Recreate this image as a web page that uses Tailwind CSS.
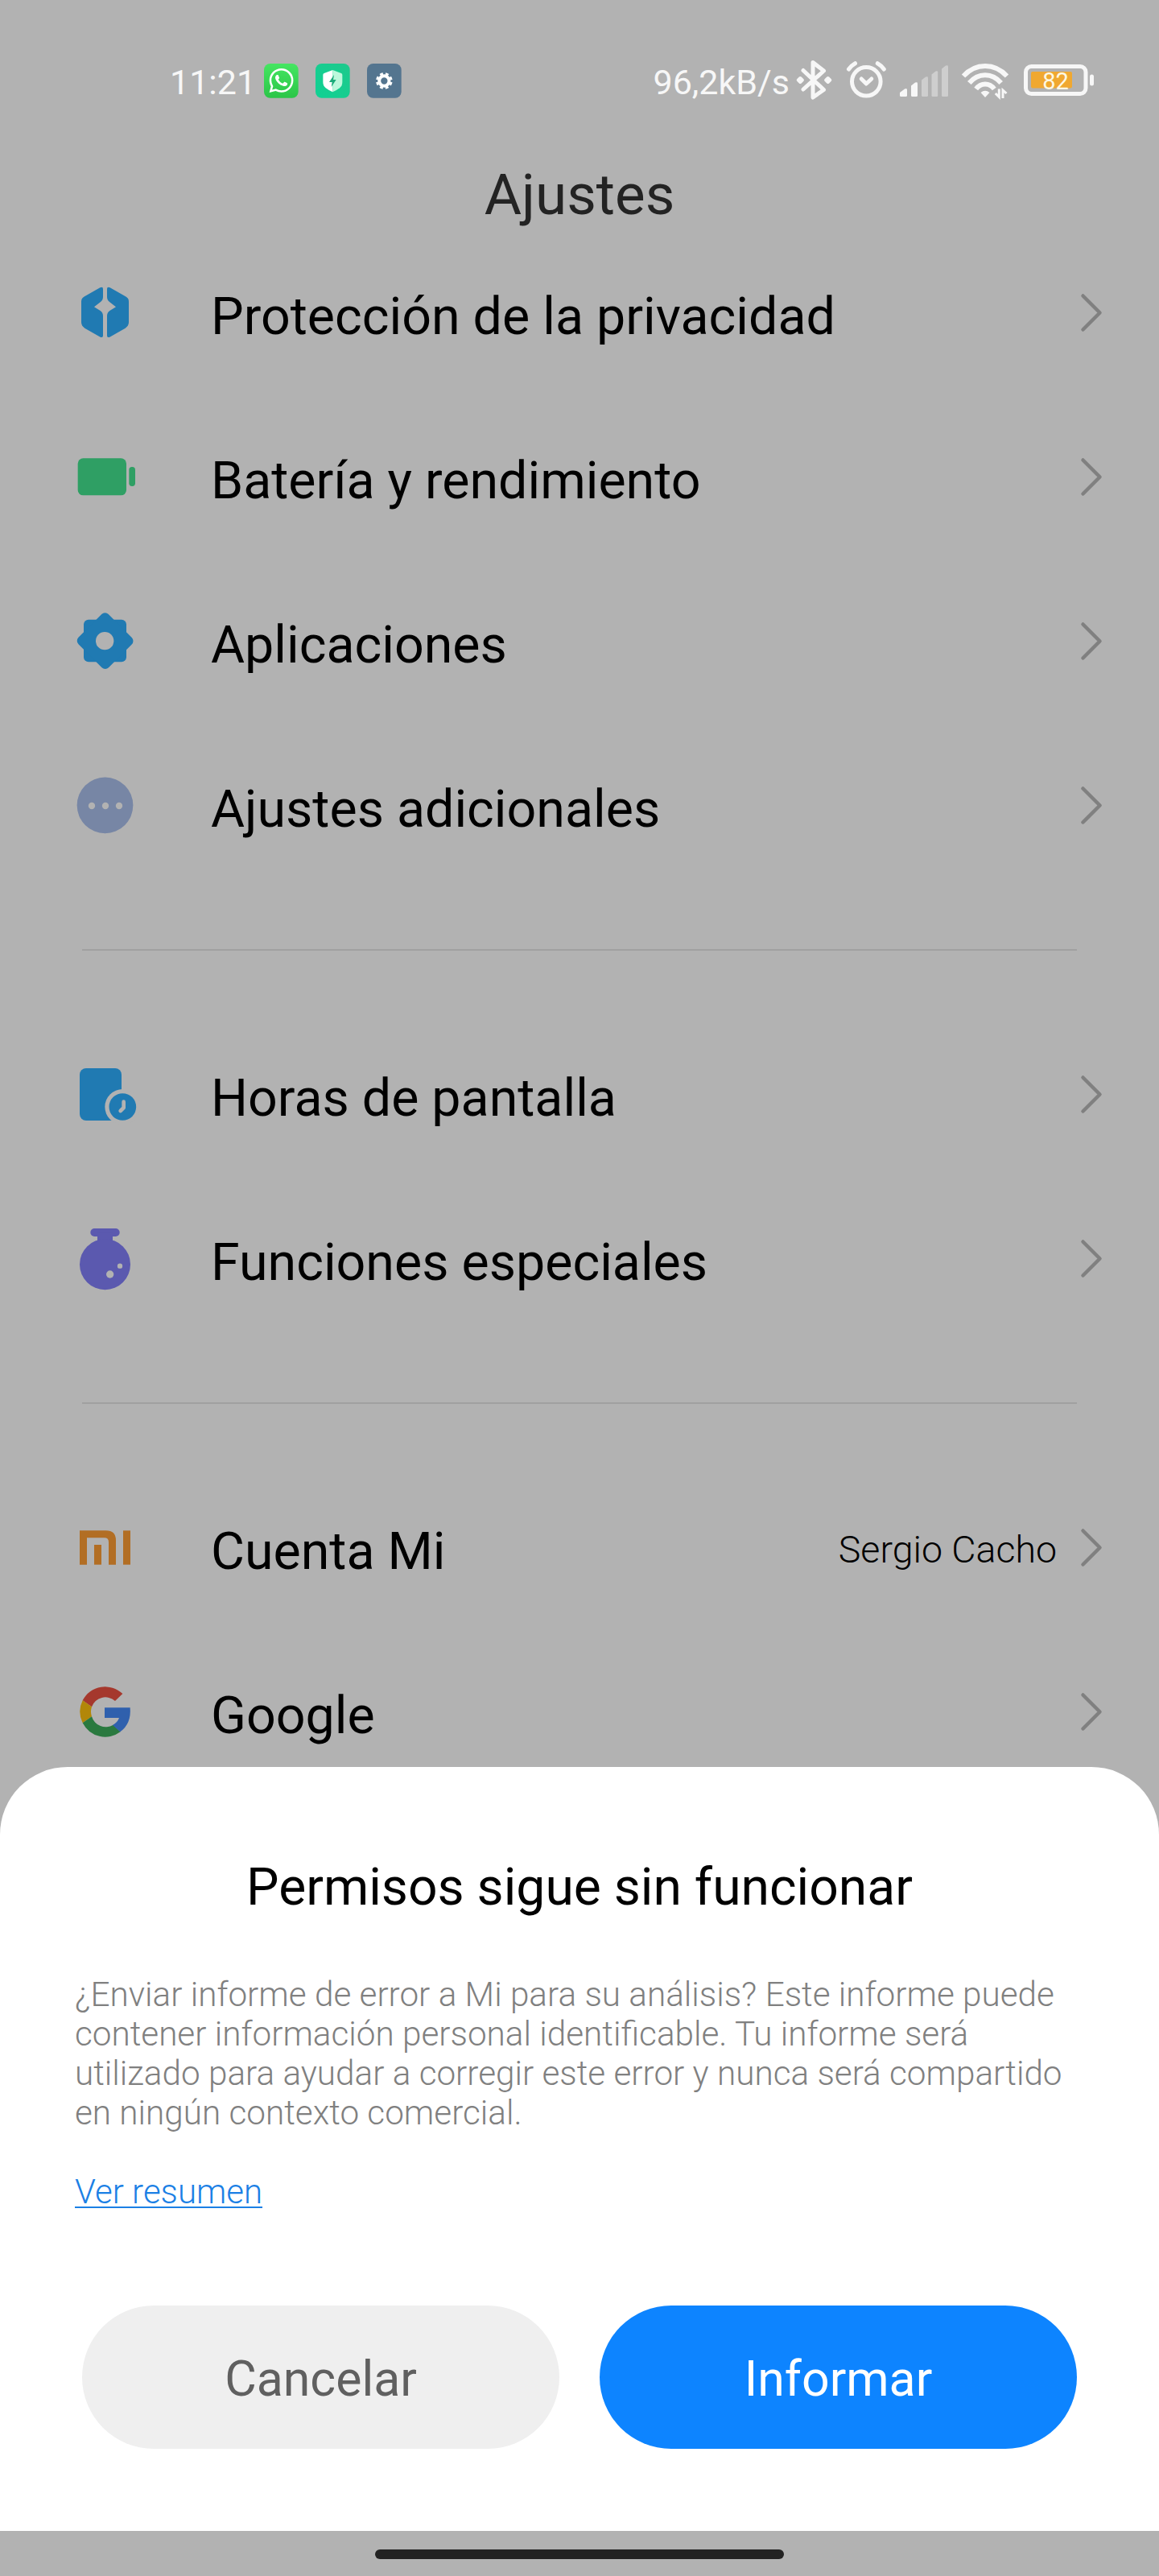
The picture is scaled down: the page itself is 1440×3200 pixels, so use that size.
<!DOCTYPE html>
<html lang="es">
<head>
    <meta charset="UTF-8">
    <meta name="viewport" content="width=device-width, initial-scale=1.0">
    <title>Ajustes</title>
    <script src="https://cdn.jsdelivr.net/npm/@tailwindcss/browser@4"></script>
</head>
<body class="bg-[#b2b2b2]">
<div class="w-[1440px] h-[3200px] flex flex-col overflow-hidden bg-[#b2b2b2] text-black font-['Roboto',sans-serif]">

    <!-- Status bar -->
    <div class="h-[200px] shrink-0 flex items-center justify-between pl-[211px] pr-[79px] text-[43px] leading-none text-[#f7f7f7]">
        <div class="flex items-center">
            <span class="w-[117px] pt-[4px]">11:21</span>
            <svg class="w-[43px] h-[43px]" viewBox="413 56 129 129">
                <defs>
                    <linearGradient id="wa" x1="0" y1="0" x2="0" y2="1">
                        <stop offset="0" stop-color="#45e661"/>
                        <stop offset="1" stop-color="#2bc548"/>
                    </linearGradient>
                </defs>
                <rect x="413" y="56" width="128" height="128" rx="23" fill="url(#wa)"/>
                <path transform="translate(432.500 74) scale(3.750)" fill="#fff" d="M17.472 14.382c-.297-.149-1.758-.867-2.03-.967-.273-.099-.471-.148-.67.15-.197.297-.767.966-.94 1.164-.173.199-.347.223-.644.075-.297-.15-1.255-.463-2.39-1.475-.883-.788-1.48-1.761-1.653-2.059-.173-.297-.018-.458.13-.606.134-.133.298-.347.446-.52.149-.174.198-.298.298-.497.099-.198.05-.371-.025-.52-.075-.149-.669-1.612-.916-2.207-.242-.579-.487-.5-.669-.51-.173-.008-.371-.01-.57-.01-.198 0-.52.074-.792.372-.272.297-1.04 1.016-1.04 2.479 0 1.462 1.065 2.875 1.213 3.074.149.198 2.096 3.2 5.077 4.487.709.306 1.262.489 1.694.625.712.227 1.36.195 1.871.118.571-.085 1.758-.719 2.006-1.413.248-.694.248-1.289.173-1.413-.074-.124-.272-.198-.57-.347m-5.421 7.403h-.004a9.87 9.87 0 01-5.031-1.378l-.361-.214-3.741.982.998-3.648-.235-.374a9.86 9.86 0 01-1.51-5.26c.001-5.45 4.436-9.884 9.888-9.884 2.64 0 5.122 1.03 6.988 2.898a9.825 9.825 0 012.893 6.994c-.003 5.45-4.437 9.884-9.885 9.884m8.413-18.297A11.815 11.815 0 0012.05 0C5.495 0 .16 5.335.157 11.892c0 2.096.547 4.142 1.588 5.945L.057 24l6.305-1.654a11.882 11.882 0 005.683 1.448h.005c6.554 0 11.89-5.335 11.893-11.893a11.821 11.821 0 00-3.48-8.413z"/>
            </svg>
            <svg class="ml-[21px] w-[43px] h-[43px]" viewBox="605 56 129 129">
                <defs>
                    <linearGradient id="sec" x1="1" y1="0" x2="0" y2="1">
                        <stop offset="0" stop-color="#1ec98c"/>
                        <stop offset="1" stop-color="#0fd193"/>
                    </linearGradient>
                </defs>
                <rect x="605" y="56" width="128" height="128" rx="23" fill="url(#sec)"/>
                <path d="M669 80l-32 12q-4 2-4 6v27q0 14 10 22 10 8 26 15z" fill="#fff"/>
                <path d="M669 80l32 12q4 2 4 6v27q0 14-10 22-10 8-26 15z" fill="#bdf8dc"/>
                <path d="M674 98l-18 27h11l-3 18 18-27h-11z" fill="#1cab7a"/>
            </svg>
            <svg class="ml-[21px] w-[43px] h-[43px]" viewBox="797 56 129 129">
                <rect x="797" y="56" width="128" height="128" rx="23" fill="#54758f"/>
                <g fill="none" stroke="#fff">
                    <circle cx="861" cy="120.500" r="18.500" stroke-width="12"/>
                    <circle cx="861" cy="120.500" r="27" stroke-width="8" pathLength="16" stroke-dasharray="1.100 0.900" stroke-dashoffset="-0.450"/>
                </g>
            </svg>
        </div>

        <div class="flex items-center gap-3">
            <span class="-mr-1.5 pt-[4px]">96,2kB/s</span>
            <!-- bluetooth -->
            <svg class="w-[51px] h-[50px]" viewBox="197 15 51 50" fill="none" stroke="#f7f7f7" stroke-width="5" stroke-linejoin="round" stroke-linecap="round">
                <path d="M208 27.500l25.500 24L220 61V17.500l13.500 10.500L208 51"/>
                <path d="M204.300 37l2.500 2.500-2.500 2.500-2.500-2.500zM238.700 37l2.500 2.500-2.500 2.500-2.500-2.500z" fill="#f7f7f7" stroke-width="4"/>
            </svg>
            <!-- alarm -->
            <svg class="w-[54px] h-[50px]" viewBox="260 15 54 50" fill="none" stroke="#f7f7f7" stroke-width="5" stroke-linejoin="round" stroke-linecap="round">
                <circle cx="286.300" cy="41.300" r="17.800"/>
                <path d="M280.200 38l6.100 6 6.500-6M264.500 26q3-4.500 8-7.300M308.300 26q-3-4.500-8-7.300"/>
            </svg>
            <!-- signal -->
            <svg class="w-[64px] h-[50px]" viewBox="326 15 64 50" fill="#f7f7f7">
                <path d="M328 55l6-4.500q3-1.500 3 1v7q0 1.500-1.500 1.500h-6q-1.500 0-1.500-1.500z"/>
                <path d="M342 46.500l5-4q3-1 3 1v15q0 1.500-1.500 1.500h-5q-1.500 0-1.500-1.500z"/>
                <g fill="#cecece">
                    <path d="M355 39.500l5-4q3-1 3 1v22q0 1.500-1.500 1.500h-5q-1.500 0-1.500-1.500z"/>
                    <path d="M367.500 32.500l5-4q2.700-1 2.700 1v29q0 1.500-1.500 1.500h-4.700q-1.500 0-1.500-1.500z"/>
                    <path d="M380 25.500l5-4q3-1 3 1v36q0 1.500-1.500 1.500h-5q-1.500 0-1.500-1.500z"/>
                </g>
            </svg>
            <!-- wifi -->
            <svg class="w-[66px] h-[50px]" viewBox="402 15 66 50" fill="none" stroke="#f7f7f7" stroke-width="6">
                <path d="M407 34.500q11.500-12.500 27-12.500t27 12.500M414.300 43q8.200-9.800 19.700-9.800t19.700 9.800M422.700 50.500q4.500-6 11.300-6t11.300 6"/>
                <path d="M428.500 55q5.500-4.500 11 0l-5.500 6z" fill="#f7f7f7" stroke="none"/>
                <path d="M451.300 50.500v10l-4.500-4.500M456 62V52l4.500 4" stroke-width="3"/>
            </svg>
            <!-- battery -->
            <svg class="w-[91px] h-[50px]" viewBox="480 15 91 50">
                <rect x="484.500" y="22.500" width="74.500" height="34" rx="7" fill="none" stroke="#f7f7f7" stroke-width="5"/>
                <rect x="491" y="29" width="51" height="20.500" rx="2" fill="#f0a830"/>
                <rect x="564" y="32.500" width="5" height="14" rx="2.500" fill="#f7f7f7"/>
                <text x="521.500" y="50.700" text-anchor="middle" font-size="29" fill="#fdf8e4">82</text>
            </svg>
        </div>
    </div>

    <!-- Title -->
    <h1 class="h-[86px] shrink-0 text-center text-[71px] leading-[83px] text-[#232323]">Ajustes</h1>

    <!-- Settings list -->
    <div class="h-[1909px] shrink-0 overflow-hidden text-[64.5px] leading-[76px]">
        <div class="h-[204px] flex items-center pl-[94px] pr-[68px]">
            <svg class="w-[80px] h-[80px]" viewBox="102 54 240 240" fill="#207ab2">
                <path d="M193 82q11-5 11 5v29q0 12-10 20l-23 18 23 14q10 7 10 19v74q0 9-10 5l-58-33q-13-8-13-22v-77q0-13 12-19z"/>
                <path d="M230 82q-11-5-11 5v29q0 12 10 20l23 18-23 14q-10 7-10 19v74q0 9 10 5l58-33q13-8 13-22v-77q0-13-12-19z"/>
            </svg>
            <span class="ml-[88px] pt-[9px] grow">Protección de la privacidad</span>
            <svg class="w-[30px] h-[50px]" viewBox="0 0 30 50" fill="none" stroke="#808080" stroke-width="4.500" stroke-linecap="round" stroke-linejoin="round"><path d="M3.500 4.500l21 21-21 21"/></svg>
        </div>
        <div class="h-[204px] flex items-center pl-[94px] pr-[68px]">
            <svg class="w-[80px] h-[80px]" viewBox="102 666 240 240" fill="#2f9f64">
                <rect x="110" y="718" width="181" height="138" rx="20"/>
                <rect x="301" y="750" width="23" height="72" rx="11"/>
            </svg>
            <span class="ml-[88px] pt-[9px] grow">Batería y rendimiento</span>
            <svg class="w-[30px] h-[50px]" viewBox="0 0 30 50" fill="none" stroke="#808080" stroke-width="4.500" stroke-linecap="round" stroke-linejoin="round"><path d="M3.500 4.500l21 21-21 21"/></svg>
        </div>
        <div class="h-[204px] flex items-center pl-[94px] pr-[68px]">
            <svg class="w-[80px] h-[80px]" viewBox="102 48 240 240">
                <g fill="#207ab2">
                    <rect x="132" y="89" width="159" height="158" rx="18"/>
                    <rect x="132" y="89" width="159" height="158" rx="18" transform="rotate(45 211.500 168.500)"/>
                </g>
                <circle cx="210.500" cy="168.500" r="33.500" fill="#b2b2b2"/>
            </svg>
            <span class="ml-[88px] pt-[9px] grow">Aplicaciones</span>
            <svg class="w-[30px] h-[50px]" viewBox="0 0 30 50" fill="none" stroke="#808080" stroke-width="4.500" stroke-linecap="round" stroke-linejoin="round"><path d="M3.500 4.500l21 21-21 21"/></svg>
        </div>
        <div class="h-[204px] flex items-center pl-[94px] pr-[68px]">
            <svg class="w-[80px] h-[80px]" viewBox="102 660 240 240">
                <circle cx="211.500" cy="781" r="104.500" fill="#7786a5"/>
                <g fill="#b2b2b2">
                    <circle cx="162" cy="783" r="12.500"/>
                    <circle cx="213" cy="783" r="12.500"/>
                    <circle cx="264" cy="783" r="12.500"/>
                </g>
            </svg>
            <span class="ml-[88px] pt-[9px] grow">Ajustes adicionales</span>
            <svg class="w-[30px] h-[50px]" viewBox="0 0 30 50" fill="none" stroke="#808080" stroke-width="4.500" stroke-linecap="round" stroke-linejoin="round"><path d="M3.500 4.500l21 21-21 21"/></svg>
        </div>

        <div class="h-[155px] flex items-center px-[102px]"><div class="h-[2px] w-full bg-[#a0a0a0]"></div></div>

        <div class="h-[204px] flex items-center pl-[94px] pr-[68px]">
            <svg class="w-[80px] h-[80px]" viewBox="102 57 240 240">
                <rect x="117" y="81" width="156" height="195" rx="24" fill="#207ab2"/>
                <circle cx="277" cy="225" r="66" fill="#b2b2b2"/>
                <circle cx="277" cy="225" r="50.500" fill="#207ab2"/>
                <path d="M281 206v22l-12 12" fill="none" stroke="#b2b2b2" stroke-width="14" stroke-linecap="round" stroke-linejoin="round"/>
            </svg>
            <span class="ml-[88px] pt-[9px] grow">Horas de pantalla</span>
            <svg class="w-[30px] h-[50px]" viewBox="0 0 30 50" fill="none" stroke="#808080" stroke-width="4.500" stroke-linecap="round" stroke-linejoin="round"><path d="M3.500 4.500l21 21-21 21"/></svg>
        </div>
        <div class="h-[204px] flex items-center pl-[94px] pr-[68px]">
            <svg class="w-[80px] h-[80px]" viewBox="102 669 240 240">
                <g fill="#5b59af">
                    <rect x="157" y="678" width="109" height="30" rx="15"/>
                    <rect x="183" y="695" width="57" height="40"/>
                    <circle cx="211.500" cy="812" r="94.500"/>
                </g>
                <circle cx="230" cy="849" r="14" fill="#b2b2b2"/>
                <circle cx="267" cy="818" r="9.500" fill="#b2b2b2"/>
            </svg>
            <span class="ml-[88px] pt-[9px] grow">Funciones especiales</span>
            <svg class="w-[30px] h-[50px]" viewBox="0 0 30 50" fill="none" stroke="#808080" stroke-width="4.500" stroke-linecap="round" stroke-linejoin="round"><path d="M3.500 4.500l21 21-21 21"/></svg>
        </div>

        <div class="h-[155px] flex items-center px-[102px]"><div class="h-[2px] w-full bg-[#a0a0a0]"></div></div>

        <div class="h-[204px] flex items-center pl-[94px] pr-[68px]">
            <svg class="w-[80px] h-[80px]" viewBox="102 6 240 240" fill="#b26e24">
                <path d="M117 64h98q37 0 37 37v90h-27v-84q0-16-16-16h-65v100h-27z"/>
                <rect x="171" y="117" width="27" height="74"/>
                <rect x="279" y="64" width="27" height="127"/>
            </svg>
            <span class="ml-[88px] pt-[9px] grow">Cuenta Mi</span>
            <span class="mr-[29px] pt-[6px] text-[46.5px] font-light">Sergio Cacho</span>
            <svg class="w-[30px] h-[50px]" viewBox="0 0 30 50" fill="none" stroke="#808080" stroke-width="4.500" stroke-linecap="round" stroke-linejoin="round"><path d="M3.500 4.500l21 21-21 21"/></svg>
        </div>
        <div class="h-[204px] flex items-center pl-[94px] pr-[68px]">
            <svg class="w-[80px] h-[80px]" viewBox="102 618 240 240">
                <path d="M128 697a94.500 94.500 0 0 1 149-25l-28 27a54 54 0 0 0-87 22z" fill="#a5382d"/>
                <path d="M128 697l34 24a54 54 0 0 0 0 36l-34 24a94.500 94.500 0 0 1 0-84z" fill="#b28709"/>
                <path d="M128 781l34-24a54 54 0 0 0 80 31l27 26a94.500 94.500 0 0 1-141-33z" fill="#2a793f"/>
                <path d="M210 724h95q5 60-37 90l-28-25q18-10 24-27h-54z" fill="#2f60ad"/>
            </svg>
            <span class="ml-[88px] pt-[9px] grow">Google</span>
            <svg class="w-[30px] h-[50px]" viewBox="0 0 30 50" fill="none" stroke="#808080" stroke-width="4.500" stroke-linecap="round" stroke-linejoin="round"><path d="M3.500 4.500l21 21-21 21"/></svg>
        </div>
    </div>

    <!-- Error report sheet -->
    <div class="h-[949px] shrink-0 bg-white rounded-t-[84px] pt-[111px]">
        <h2 class="text-center text-[64.2px] leading-[76px]">Permisos sigue sin funcionar</h2>
        <p class="mt-[71px] pl-[93px] text-[42.25px] leading-[49px] font-light text-[#808080] whitespace-nowrap">
            ¿Enviar informe de error a Mi para su análisis? Este informe puede<br>
            contener información personal identificable. Tu informe será<br>
            utilizado para ayudar a corregir este error y nunca será compartido<br>
            en ningún contexto comercial.
        </p>
        <a href="#" class="block mt-[49px] ml-[93px] text-[42px] leading-[49px] font-light text-[#1b80e5] underline decoration-2 underline-offset-4">Ver resumen</a>
        <div class="mt-[117px] px-[102px] flex gap-[50px] text-[60.8px]">
            <button class="flex-1 h-[178px] pt-1.5 rounded-full bg-[#efefef] text-[#606060]">Cancelar</button>
            <button class="flex-1 h-[178px] pt-1.5 rounded-full bg-[#0d84ff] text-white">Informar</button>
        </div>
    </div>

    <!-- Gesture bar -->
    <div class="h-[56px] shrink-0 flex justify-center pt-[23px]">
        <div class="w-[508px] h-[12px] rounded-full bg-[#232323]"></div>
    </div>
</div>
</body>
</html>
